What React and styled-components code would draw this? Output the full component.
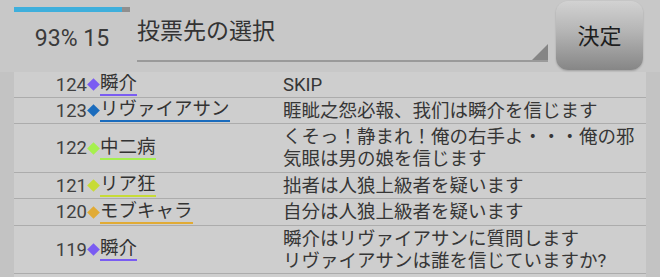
import React from 'react';
import styled, { createGlobalStyle } from 'styled-components';

const GlobalStyle = createGlobalStyle`
  html, body {
    margin: 0;
    padding: 0;
    background: #c8c8c8;
  }
  body {
    font-family: Roboto, "Noto Sans CJK JP", sans-serif;
    color: #333;
  }
`;

const Screen = styled.div`
  width: 660px;
  height: 277px;
  overflow: hidden;
  background: #c8c8c8;
`;

const Header = styled.header`
  height: 72px;
  display: flex;
  align-items: flex-start;
  padding: 0 17px 0 14px;
  box-sizing: border-box;
`;

const Status = styled.div`
  width: 116px;
  padding-top: 7px;
  display: flex;
  flex-direction: column;
  align-items: center;
`;

const Progress = styled.div`
  width: 100%;
  height: 5px;
  background: #8f8f8f;
`;

const ProgressFill = styled.div`
  height: 100%;
  background: #3eafdc;
`;

const Count = styled.div`
  margin-top: 12px;
  font-size: 23px;
  line-height: 30px;
  color: #3a3a3a;
`;

const Select = styled.div`
  position: relative;
  flex: 1;
  margin: 0 8px 0 7px;
  height: 62px;
  border-bottom: 2px solid #9a9a9a;
  box-sizing: border-box;
  padding-top: 17px;
  font-size: 23px;
  line-height: 30px;
  color: #333;

  &::after {
    content: '';
    position: absolute;
    right: 0;
    bottom: 0;
    width: 0;
    height: 0;
    border-left: 16px solid transparent;
    border-bottom: 16px solid #858585;
  }
`;

const Button = styled.button`
  width: 87px;
  height: 69px;
  margin-top: 1px;
  border: none;
  border-radius: 12px;
  background: linear-gradient(#d2d2d2, #b4b4b4 45%, #868686);
  box-shadow: 0 1px 2px rgba(0, 0, 0, 0.2);
  font-family: "Noto Sans CJK JP", sans-serif;
  font-size: 22px;
  color: #1e1e1e;
  padding: 0 0 4px;
`;

const List = styled.section`
  background: #c3c3c3;
  padding: 0 14px 0 14px;
  height: 205px;
`;

const Table = styled.div`
  background: #cecece;
  height: 100%;
`;

const Row = styled.div`
  display: grid;
  grid-template-columns: 86px 183px 1fr;
  align-items: center;
  min-height: ${p => p.$h}px;
  border-bottom: 1px solid #acacac;
  box-sizing: border-box;
  font-size: 18.5px;
  line-height: 22px;
`;

const No = styled.div`
  display: flex;
  justify-content: flex-end;
  align-items: center;
  color: #404040;
`;

const Diamond = styled.span`
  width: 9px;
  height: 9px;
  margin: 0 2px;
  background: ${p => p.$color};
  transform: rotate(45deg);
`;

const Name = styled.div`
  justify-self: start;
  color: #333;
  line-height: 21px;
  border-bottom: 2px solid ${p => p.$color};
`;

const Message = styled.div`
  color: #363636;
  white-space: pre-line;
  padding-right: 8px;
`;

const logs = [
  { no: 124, name: '瞬介', color: '#7a5cf2', msg: 'SKIP', h: 26 },
  { no: 123, name: 'リヴァイアサン', color: '#1b6cbd', msg: '睚眦之怨必報、我们は瞬介を信じます', h: 26 },
  { no: 122, name: '中二病', color: '#a6f04e', msg: 'くそっ！静まれ！俺の右手よ・・・俺の邪気眼は男の娘を信じます', h: 49 },
  { no: 121, name: 'リア狂', color: '#c7db36', msg: '拙者は人狼上級者を疑います', h: 26 },
  { no: 120, name: 'モブキャラ', color: '#e1ab35', msg: '自分は人狼上級者を疑います', h: 27 },
  { no: 119, name: '瞬介', color: '#7a5cf2', msg: '瞬介はリヴァイアサンに質問します\nリヴァイアサンは誰を信じていますか?', h: 48 },
];

export default function App() {
  return (
    <Screen>
      <GlobalStyle />
      <Header>
        <Status>
          <Progress>
            <ProgressFill style={{ width: '93%' }} />
          </Progress>
          <Count>93% 15</Count>
        </Status>
        <Select>投票先の選択</Select>
        <Button>決定</Button>
      </Header>
      <List>
        <Table>
          {logs.map(l => (
            <Row key={l.no} $h={l.h}>
              <No>
                {l.no}
                <Diamond $color={l.color} />
              </No>
              <div>
                <Name $color={l.color}>{l.name}</Name>
              </div>
              <Message>{l.msg}</Message>
            </Row>
          ))}
        </Table>
      </List>
    </Screen>
  );
}
